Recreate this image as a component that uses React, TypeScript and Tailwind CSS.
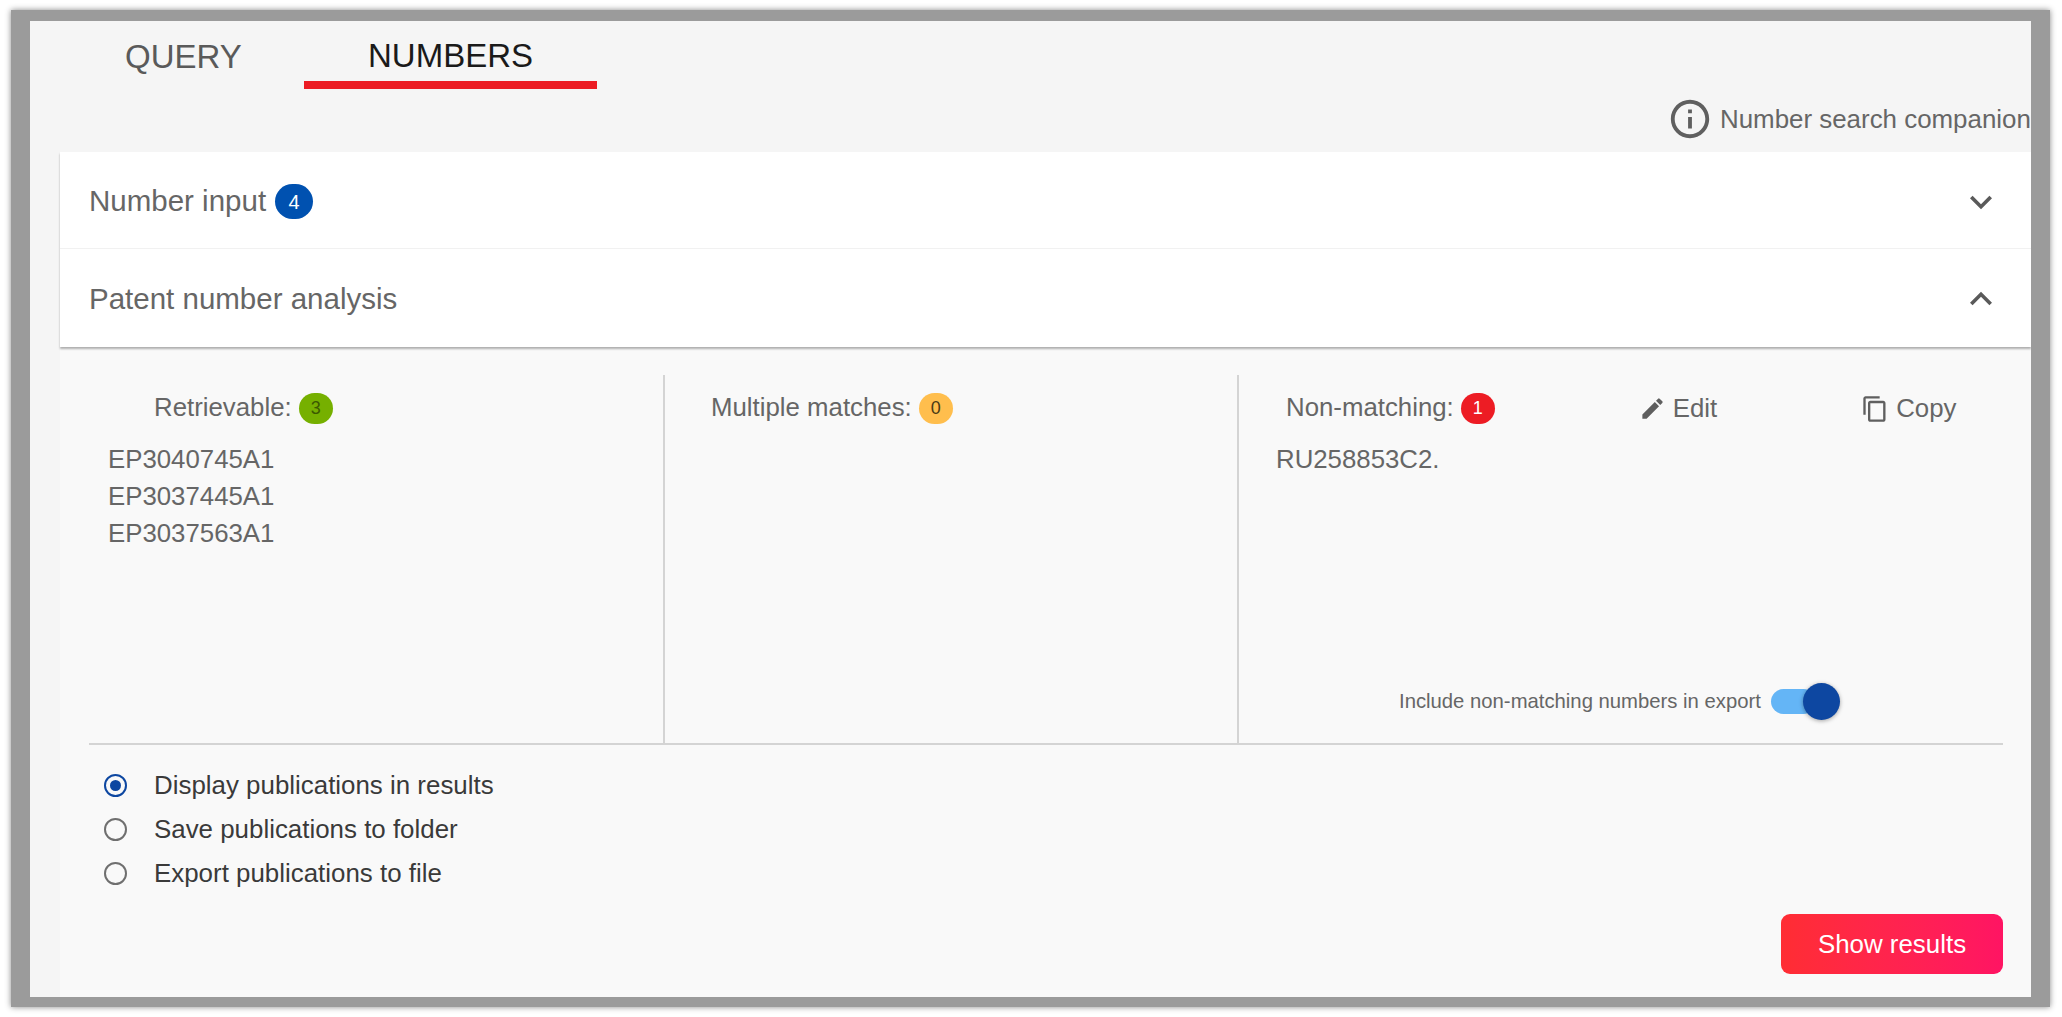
import { MdContentCopy, MdEdit, MdExpandLess, MdExpandMore, MdInfoOutline } from "react-icons/md";

// Columns of the number analysis panel
const retrievable = ["EP3040745A1", "EP3037445A1", "EP3037563A1"];

const radios = [
  { label: "Display publications in results", checked: true },
  { label: "Save publications to folder", checked: false },
  { label: "Export publications to file", checked: false },
];

function Badge({ value, className }: { value: number; className: string }) {
  return (
    <span className={`flex h-[31px] w-[34px] items-center justify-center rounded-full text-[18px] ${className}`}>
      {value}
    </span>
  );
}

export default function App() {
  return (
    <div className="h-[1017px] w-[2062px] overflow-hidden bg-white pl-[11px] pt-[10px] font-['Liberation_Sans',Arial,sans-serif]">
      {/* Grey screenshot frame */}
      <div className="h-[997px] w-[2039px] border-b-[10px] border-l-[19px] border-r-[19px] border-t-[11px] border-[#9b9b9b] shadow-[0_0_6px_#8a8a8a]">
        <div className="flex h-full flex-col overflow-hidden bg-[#f5f5f5]">
          {/* Tabs */}
          <div className="flex h-[68px] shrink-0 pl-[95px]">
            <div className="w-[179px] pt-[17px] text-[33px] leading-[38px] text-[#5a5a5a]">QUERY</div>
            <div className="h-[68px] w-[293px] border-b-[8px] border-[#ec1c24] pl-[64px] pt-[16px] text-[33px] leading-[38px] text-[#1a1a1a]">
              NUMBERS
            </div>
          </div>

          <div className="flex h-[63px] shrink-0 items-center justify-end overflow-hidden pb-[3px] text-[25.9px] text-[#666]">
            <div className="flex w-[364px] shrink-0 items-center gap-[7px]">
              <MdInfoOutline size={46} className="shrink-0 text-[#5f5f5f]" />
              <span className="whitespace-nowrap">Number search companion</span>
            </div>
          </div>

          {/* Accordion headers */}
          <div className="relative z-10 ml-[30px] shrink-0 bg-white shadow-[0_2px_2px_rgba(0,0,0,0.3)]">
            <div className="flex h-[97px] items-center justify-between border-b border-[#f1f1f1] pl-[29px] pr-[28px] pt-[3px]">
              <div className="flex items-center gap-[9px] text-[29.5px] text-[#666]">
                Number input
                <span className="flex h-[35px] w-[38px] items-center justify-center rounded-full bg-[#0051b0] text-[20px] text-white">
                  4
                </span>
              </div>
              <MdExpandMore size={44} className="text-[#5a5a5a]" />
            </div>
            <div className="flex h-[98px] items-center justify-between pl-[29px] pr-[28px] pt-[2px] text-[29.5px] text-[#666]">
              Patent number analysis
              <MdExpandLess size={44} className="text-[#5a5a5a]" />
            </div>
          </div>

          {/* Number analysis */}
          <div className="ml-[30px] min-h-0 flex-1 bg-[#f9f9f9] pl-[29px] pr-[28px] pt-[28px]">
            <div className="grid h-[370px] grid-cols-[576px_574px_1fr] border-b-2 border-[#d4d4d4] text-[25.8px] text-[#666]">
              <div className="border-r-2 border-[#d4d4d4] pt-[18px]">
                <div className="flex h-[31px] items-center gap-[7px] pl-[65px]">
                  <span className="mb-[2px]">Retrievable:</span>
                  <Badge value={3} className="bg-[#76b000] text-[#3c5a00]" />
                </div>
                <div className="mt-[17px] pl-[19px] leading-[37px]">
                  {retrievable.map((num) => (
                    <div key={num}>{num}</div>
                  ))}
                </div>
              </div>

              <div className="border-r-2 border-[#d4d4d4] pt-[18px]">
                <div className="flex h-[31px] items-center gap-[7px] pl-[46px]">
                  <span className="mb-[2px]">Multiple matches:</span>
                  <Badge value={0} className="bg-[#ffbe4d] text-[#4a3a14]" />
                </div>
              </div>

              <div className="flex flex-col pt-[18px]">
                <div className="flex h-[31px] items-center pl-[47px]">
                  <span className="mb-[2px] mr-[7px]">Non-matching:</span>
                  <Badge value={1} className="bg-[#ed1c24] text-white" />
                  <span className="ml-[144px] flex items-center gap-[7px]">
                    <MdEdit size={27} className="text-[#5f5f5f]" />
                    Edit
                  </span>
                  <span className="ml-[144px] flex items-center gap-[7px]">
                    <MdContentCopy size={28} className="text-[#5f5f5f]" />
                    Copy
                  </span>
                </div>
                <div className="mt-[17px] pl-[37px] leading-[37px]">RU258853C2.</div>
                <div className="mb-[23px] mt-auto flex h-[37px] items-center pl-[160px] text-[20.3px]">
                  <span className="whitespace-nowrap">Include non-matching numbers in export</span>
                  <div className="relative ml-[10px] h-[25px] w-[45px] rounded-full bg-[#64b5f6]">
                    <span className="absolute left-[32px] top-[-6px] h-[37px] w-[37px] rounded-full bg-[#0d47a1] shadow-[0_1px_4px_rgba(0,0,0,0.35)]" />
                  </div>
                </div>
              </div>
            </div>

            {/* Result action */}
            <div className="flex flex-col gap-[22px] pl-[15px] pt-[29px]">
              {radios.map((radio) => (
                <label key={radio.label} className="flex h-[22px] items-center gap-[27px] text-[25.9px] text-[#3a3a3a]">
                  <span
                    className={`flex h-[23px] w-[23px] shrink-0 items-center justify-center rounded-full border-2 ${
                      radio.checked ? "border-[#0d47a1]" : "border-[#6f6f6f]"
                    }`}
                  >
                    {radio.checked && <span className="h-[11px] w-[11px] rounded-full bg-[#0d47a1]" />}
                  </span>
                  {radio.label}
                </label>
              ))}
            </div>

            <div className="mt-[30px] flex justify-end">
              <button className="h-[60px] w-[222px] rounded-[9px] bg-gradient-to-r from-[#ff2d33] to-[#ff1463] text-[25.9px] text-white">
                Show results
              </button>
            </div>
          </div>
        </div>
      </div>
    </div>
  );
}
